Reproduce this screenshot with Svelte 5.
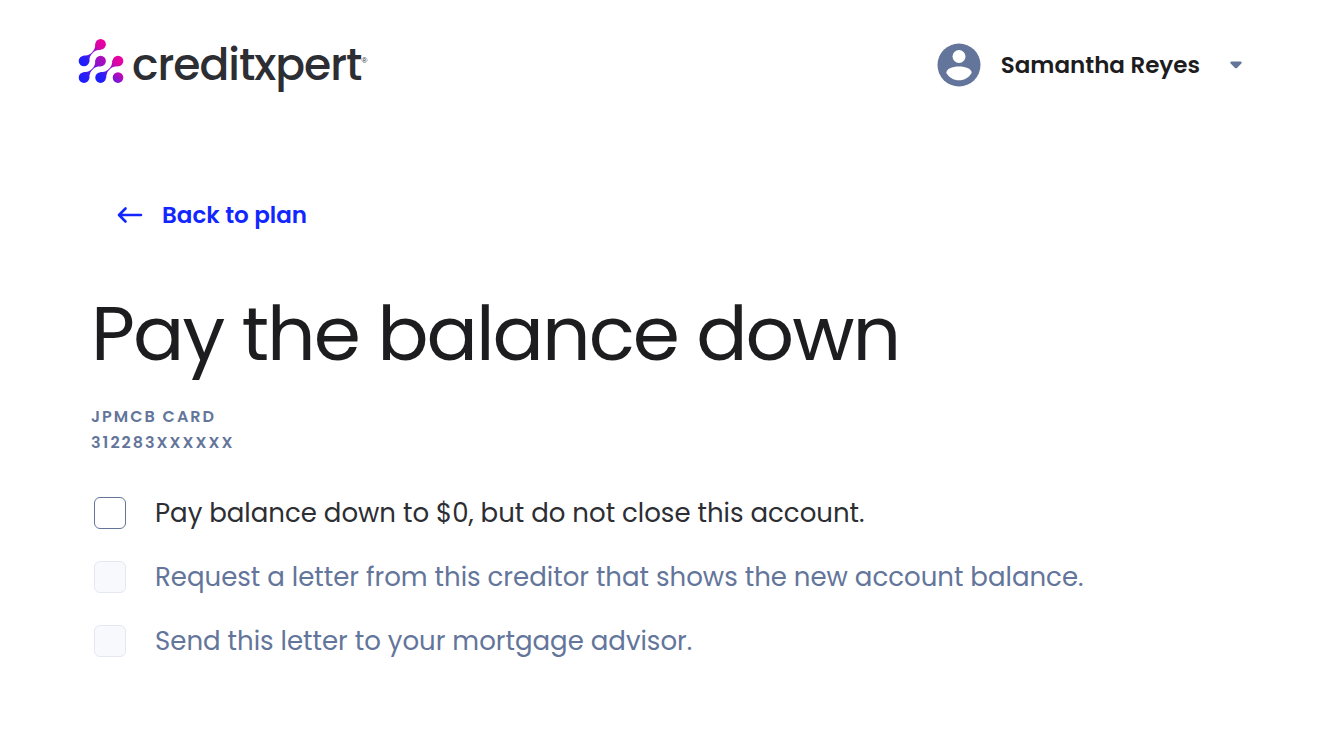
<script lang="ts">
  interface Step {
    id: string;
    label: string;
    done: boolean;
    disabled: boolean;
  }

  const userName = 'Samantha Reyes';
  const account = { creditor: 'JPMCB Card', number: '312283XXXXXX' };

  let steps = $state<Step[]>([
    {
      id: 'pay',
      label: 'Pay balance down to $0, but do not close this account.',
      done: false,
      disabled: false,
    },
    {
      id: 'request',
      label: 'Request a letter from this creditor that shows the new account balance.',
      done: false,
      disabled: true,
    },
    {
      id: 'send',
      label: 'Send this letter to your mortgage advisor.',
      done: false,
      disabled: true,
    },
  ]);

  // logo: dots on a 3x3 grid, some joined by a tapered diagonal link
  const dots = [
    { x: 22.6, y: 6.2, fill: 'hot' },
    { x: 6, y: 23, fill: 'cool' },
    { x: 22.6, y: 23, fill: 'mid' },
    { x: 40, y: 23, fill: 'hot' },
    { x: 6, y: 39.6, fill: 'cool' },
    { x: 22.6, y: 39.6, fill: 'cool' },
    { x: 40, y: 39.6, fill: 'mix' },
  ];
  const links = [
    { x: 6, y: 23, fill: 'link' },
    { x: 6, y: 39.6, fill: 'link-mid' },
    { x: 22.9, y: 39.6, fill: 'link' },
  ];
</script>

<header class="topbar">
  <a class="logo" href="#home" aria-label="creditxpert home">
    <svg class="logo__mark" viewBox="0 0 46 46" aria-hidden="true">
      <defs>
        <linearGradient id="cool" x1="0" y1="1" x2="1" y2="0">
          <stop offset="0" stop-color="#1020ff" />
          <stop offset="1" stop-color="#3c1cf4" />
        </linearGradient>
        <linearGradient id="mid" x1="0" y1="1" x2="1" y2="0">
          <stop offset="0" stop-color="#8a14cc" />
          <stop offset="1" stop-color="#b60cb4" />
        </linearGradient>
        <linearGradient id="hot" x1="0" y1="1" x2="1" y2="0">
          <stop offset="0" stop-color="#cc06ac" />
          <stop offset="1" stop-color="#f4009c" />
        </linearGradient>
        <linearGradient id="mix" x1="0" y1="1" x2="1" y2="0">
          <stop offset="0" stop-color="#5a1ae8" />
          <stop offset="1" stop-color="#e004a4" />
        </linearGradient>
        <linearGradient id="link" gradientUnits="userSpaceOnUse" x1="3" y1="-3" x2="14" y2="-14">
          <stop offset="0" stop-color="#3c1cf4" />
          <stop offset="1" stop-color="#cc06ac" />
        </linearGradient>
        <linearGradient id="link-mid" gradientUnits="userSpaceOnUse" x1="3" y1="-3" x2="14" y2="-14">
          <stop offset="0" stop-color="#3c1cf4" />
          <stop offset="1" stop-color="#8a14cc" />
        </linearGradient>
      </defs>
      {#each links as { x, y, fill }}
        <path
          transform="translate({x} {y})"
          d="M-1 -5.3Q5 -5.3 8.2 -8.8Q11.6 -12 11.3 -17.500L17.500 -11.300Q11.800 -11.500 8.700 -8.100Q5 -5 5.300 1Z"
          fill="url(#{fill})"
        />
      {/each}
      {#each dots as { x, y, fill }}
        <circle cx={x} cy={y} r="5.3" fill="url(#{fill})" />
      {/each}
    </svg>
    <span class="logo__name">creditxpert</span>
    <span class="logo__reg">®</span>
  </a>

  <button type="button" class="user" aria-haspopup="menu">
    <svg class="user__avatar" viewBox="0 0 44 44" aria-hidden="true">
      <circle cx="22" cy="22" r="21.5" fill="#63759a" />
      <circle cx="22" cy="13.5" r="6.5" fill="#fff" />
      <path d="M9.3 30C9.3 26 15 23.6 22 23.6S34.7 26 34.7 30C32 34.5 27.5 37.3 22 37.3S12 34.5 9.3 30Z" fill="#fff" />
    </svg>
    <span class="user__name">{userName}</span>
    <svg class="user__caret" viewBox="0 0 12 8" aria-hidden="true">
      <path
        d="M1.5 .5H10.5Q12.300 .8 11.300 2.500L7.200 6.800Q6 7.900 4.800 6.800L.7 2.500Q-.3 .8 1.500 .5Z"
        fill="#63759a"
      />
    </svg>
  </button>
</header>

<main class="content">
  <a class="back" href="#plan">
    <svg class="back__arrow" viewBox="0 0 26 18" aria-hidden="true">
      <path d="M24 9H2.500M8.500 2.500L2 9L8.500 15.500" />
    </svg>
    Back to plan
  </a>

  <h1>Pay the balance down</h1>

  <p class="account">
    {account.creditor}<br />
    {account.number}
  </p>

  <ul class="steps">
    {#each steps as step (step.id)}
      <li>
        <label class="step" class:step--disabled={step.disabled}>
          <input type="checkbox" bind:checked={step.done} disabled={step.disabled} />
          <span>{step.label}</span>
        </label>
      </li>
    {/each}
  </ul>
</main>

<style>
  :global(body) {
    margin: 0;
    background: #fff;
    color: #1d1d1f;
    font-family: Poppins, Inter, 'Open Sans', sans-serif;
  }

  .topbar {
    display: flex;
    align-items: center;
    justify-content: space-between;
    padding: 36px 82px 36px 78px;
  }

  .logo {
    display: flex;
    align-items: center;
    color: #2c2e33;
    text-decoration: none;
  }

  .logo__mark {
    width: 46px;
    height: 46px;
    margin: 0 8px 8px 0;
  }

  .logo__name {
    font-size: 44px;
    font-weight: 500;
    line-height: 58px;
    letter-spacing: -1px;
  }

  .logo__reg {
    margin-bottom: 8px;
    font-family: 'Liberation Sans', sans-serif;
    font-size: 8px;
    line-height: 8px;
  }

  .user {
    display: flex;
    align-items: center;
    padding: 0;
    border: 0;
    background: none;
    color: inherit;
    font: inherit;
    cursor: pointer;
  }

  .user__avatar {
    width: 44px;
    height: 44px;
  }

  .user__name {
    margin: 0 30px 0 20px;
    font-size: 23px;
    font-weight: 600;
    line-height: 32px;
  }

  .user__caret {
    width: 12px;
    height: 8px;
  }

  .content {
    padding: 68px 91px 48px;
  }

  .back {
    display: inline-flex;
    align-items: center;
    gap: 19px;
    margin-left: 26px;
    color: #1226ff;
    font-size: 23px;
    font-weight: 600;
    line-height: 34px;
    text-decoration: none;
  }

  .back__arrow {
    width: 26px;
    height: 18px;
    fill: none;
    stroke: currentColor;
    stroke-width: 2.6;
    stroke-linecap: round;
    stroke-linejoin: round;
  }

  h1 {
    margin: 54px 0 0;
    font-size: 76px;
    font-weight: 400;
    line-height: 96px;
    letter-spacing: -2px;
  }

  .account {
    margin: 22px 0 0;
    color: #63759a;
    font-size: 16px;
    font-weight: 600;
    line-height: 26px;
    letter-spacing: 2px;
    text-transform: uppercase;
  }

  .steps {
    display: flex;
    flex-direction: column;
    gap: 24px;
    margin: 37px 0 0;
    padding: 0 0 0 3px;
    list-style: none;
  }

  .step {
    display: flex;
    align-items: center;
    gap: 29px;
    color: #2c2e33;
    font-size: 26px;
    line-height: 40px;
    cursor: pointer;
  }

  .step input {
    flex: none;
    appearance: none;
    box-sizing: border-box;
    width: 32px;
    height: 32px;
    margin: 0;
    border: 1px solid #63759a;
    border-radius: 6px;
    background: #fff;
    cursor: inherit;
  }

  .step input:checked {
    background: #63759a;
  }

  .step--disabled {
    color: #63759a;
    cursor: default;
  }

  .step--disabled input {
    border-color: #e4e8f3;
    background: #f8f9fd;
  }
</style>
